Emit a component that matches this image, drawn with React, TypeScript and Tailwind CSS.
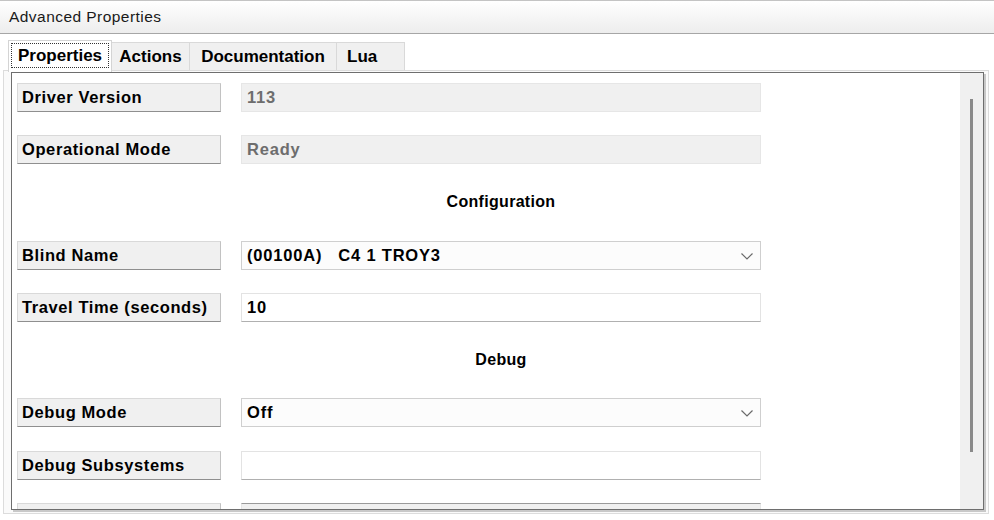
import React from "react";

const font = { fontFamily: '"Liberation Sans", Arial, sans-serif' };

function Label({ text }: { text: string }) {
  return (
    <div className="w-[204px] h-[29px] shrink-0 bg-[#f0f0f0] border border-[#d9d9d9] border-r-[#c2c2c2] border-b-[#8f8f8f] flex items-center pl-[4px] text-[16.5px] font-bold tracking-[0.6px] text-black whitespace-nowrap">
      {text}
    </div>
  );
}

function Disabled({ text }: { text: string }) {
  return (
    <div className="w-[520px] h-[29px] bg-[#f0f0f0] border border-[#e6e6e6] flex items-center pl-[5px] text-[16.5px] font-bold tracking-[0.8px] text-[#6d6d6d]">
      {text}
    </div>
  );
}

function Select({ text }: { text: string }) {
  return (
    <div className="w-[520px] h-[29px] bg-[#fcfcfc] border border-[#cfcfcf] flex items-center justify-between pl-[5px] pr-[7px] text-[16.5px] font-bold tracking-[0.8px] text-black whitespace-pre">
      <span>{text}</span>
      <svg width="12" height="7" viewBox="0 0 12 7" className="mt-[1px]">
        <path d="M0.5 0.5 L6 6 L11.5 0.5" fill="none" stroke="#6a6a6a" strokeWidth="1.2" />
      </svg>
    </div>
  );
}

function TextField({ text }: { text: string }) {
  return (
    <div className="w-[520px] h-[29px] bg-white border border-[#e3e3e3] border-b-[#b0b0b0] flex items-center pl-[5px] text-[16.5px] font-bold tracking-[0.8px] text-black">
      {text}
    </div>
  );
}

function Row({ label, children, className }: { label: string; children: React.ReactNode; className?: string }) {
  return (
    <div className={"flex items-center gap-[20px] h-[29px] shrink-0 " + (className ?? "")}>
      <Label text={label} />
      {children}
    </div>
  );
}

function Header({ text, className }: { text: string; className?: string }) {
  return (
    <div className={"h-[29px] shrink-0 flex items-center " + (className ?? "")}>
      <div className="w-[204px] shrink-0" />
      <div className="w-[20px] shrink-0" />
      <div className="w-[520px] text-center text-[16px] font-bold tracking-[0.3px] text-black">{text}</div>
    </div>
  );
}

export default function App() {
  return (
    <div style={font} className="w-[994px] h-[520px] bg-white overflow-hidden text-black">
      {/* Title bar */}
      <div className="h-[34px] border-t border-[#c4c4c4] border-b border-b-[#a6a6a6] bg-gradient-to-b from-white to-[#ededed] flex items-center pl-[9px] text-[15.5px] tracking-[0.45px] text-[#1a1a1a]">
        Advanced Properties
      </div>

      {/* Tabs */}
      <div className="mt-[6px] pl-[8px] flex items-end h-[30px] relative z-10">
        <div className="w-[104px] h-[32px] mb-[-2px] bg-white border border-[#d4d4d4] border-b-0 flex items-start pt-[2px] px-[2px]">
          <div className="w-full h-[25px] border border-dotted border-[#333] flex items-center justify-center text-[17px] font-bold">
            Properties
          </div>
        </div>
        <div className="w-[78px] h-[28px] bg-[#f0f0f0] border border-[#d9d9d9] border-l-0 border-b-0 flex items-center justify-center text-[17px] font-bold">
          Actions
        </div>
        <div className="w-[147px] h-[28px] bg-[#f0f0f0] border border-[#d9d9d9] border-l-0 border-b-0 flex items-center justify-center text-[17px] font-bold">
          Documentation
        </div>
        <div className="w-[68px] h-[28px] bg-[#f0f0f0] border border-[#d9d9d9] border-l-0 border-b-0 flex items-center pl-[10px] text-[17px] font-bold">
          Lua
        </div>
      </div>

      {/* Tab page */}
      <div className="ml-[3px] w-[986px] h-[444px] border border-[#dcdcdc] bg-[#fafafa] pl-[7px] pt-[1px] pr-[3px] pb-[3px]">
        <div className="h-full w-[973px] border border-[#6e6e6e] shadow-[2px_2px_0_#c8c8c8] flex overflow-hidden">
          <div className="flex-1 bg-white pl-[5px] pt-[10px] flex flex-col overflow-hidden">
            <Row label="Driver Version">
              <Disabled text="113" />
            </Row>
            <Row label="Operational Mode" className="mt-[23px]">
              <Disabled text="Ready" />
            </Row>
            <Header text="Configuration" className="mt-[23px]" />
            <Row label="Blind Name" className="mt-[25px]">
              <Select text="(00100A)   C4 1 TROY3" />
            </Row>
            <Row label="Travel Time (seconds)" className="mt-[23px]">
              <TextField text="10" />
            </Row>
            <Header text="Debug" className="mt-[23px]" />
            <Row label="Debug Mode" className="mt-[24px]">
              <Select text="Off" />
            </Row>
            <Row label="Debug Subsystems" className="mt-[24px]">
              <TextField text="" />
            </Row>
            <Row label="" className="mt-[23px]">
              <div className="w-[520px] h-[29px] bg-[#f0f0f0] border border-[#e6e6e6] border-t-[#9a9a9a]" />
            </Row>
          </div>
          <div className="w-[23px] shrink-0 bg-[#f0f0f0] pt-[26px] pl-[10px]">
            <div className="w-[3px] h-[353px] bg-[#8a8a8a]" />
          </div>
        </div>
      </div>
    </div>
  );
}
